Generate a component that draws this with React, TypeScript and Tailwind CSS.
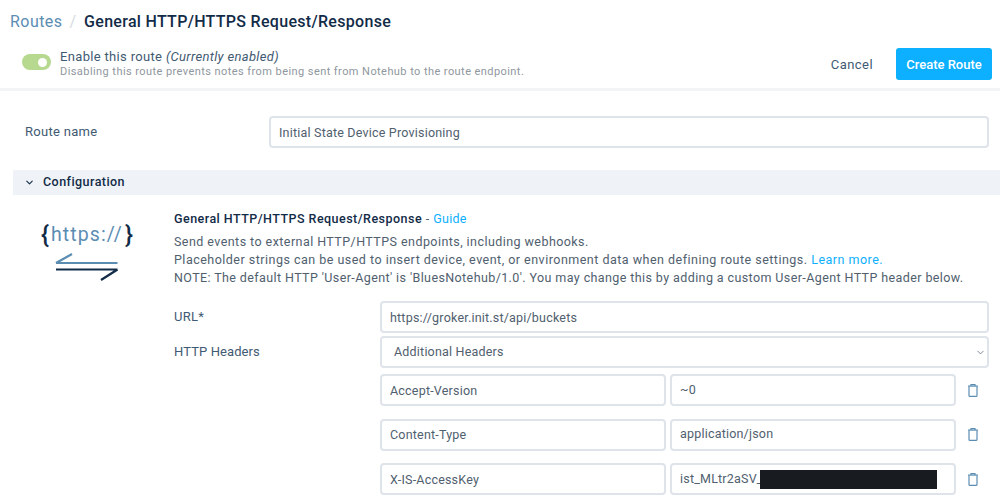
import { ChevronDown } from "lucide-react";

const inputBox =
  "h-[32px] w-full rounded-[4px] border-2 border-[#dfe4ea] bg-white px-[8px] text-[12.5px] tracking-[0.2px] text-[#50606e] outline-none";

function TrashIcon() {
  return (
    <svg width="10" height="13" viewBox="0 0 10 13" fill="none" stroke="#5b8db3" strokeWidth="1.2">
      <path d="M0 2.1H10" />
      <path d="M3 2V0.6H7V2" />
      <path d="M1 2.4V11.4C1 12 1.4 12.4 2 12.4H8C8.6 12.4 9 12 9 11.4V2.4" />
    </svg>
  );
}

function HeaderRow({ name, value, redacted }: { name: string; value: string; redacted?: boolean }) {
  return (
    <div className="flex h-[32px] items-center">
      <input readOnly value={name} className={`${inputBox} !w-[286px] shrink-0`} />
      <div className={`${inputBox} ml-[4px] flex !w-[286px] shrink-0 items-center`}>
        <span className="whitespace-nowrap">{value}</span>
        {redacted && <span className="-ml-[3px] h-[19px] w-[177px] shrink-0 bg-[#181c20]" />}
      </div>
      <button className="ml-[10px] flex w-[13px] items-center justify-center">
        <TrashIcon />
      </button>
    </div>
  );
}

export default function App() {
  return (
    <main className="h-[502px] w-[1000px] overflow-hidden bg-white font-['Roboto',sans-serif] text-[#50606e]">
      <header className="h-[91px] border-b-[3px] border-[#f3f4f5] pl-[10px] pr-[8px]">
        <div className="flex h-[44px] items-center pb-[1px] text-[16px] font-medium">
          <span className="font-normal tracking-[0.45px] text-[#5b8db3]">Routes</span>
          <span className="ml-[7px] mr-[8px] font-normal text-[#d5dbe0]">/</span>
          <span className="tracking-[0.3px] text-[#122b47]">General HTTP/HTTPS Request/Response</span>
        </div>
        <div className="flex items-start justify-between">
          <div className="flex items-start pl-[12px] pt-[5px]">
            <div className="mt-[5px] flex h-[16px] w-[29px] items-center justify-end rounded-full bg-[#b6d98f] pr-[4px]">
              <span className="h-[9px] w-[9px] rounded-full bg-white" />
            </div>
            <div className="ml-[9px]">
              <p className="text-[13px] leading-[15px] tracking-[0.33px] text-[#3f5a73]">
                Enable this route <em>(Currently enabled)</em>
              </p>
              <p className="text-[11px] leading-[15px] tracking-[0.43px] text-[#8f979e]">
                Disabling this route prevents notes from being sent from Notehub to the route endpoint.
              </p>
            </div>
          </div>
          <div className="flex items-center pt-[4px]">
            <button className="pt-[2px] text-[13px] tracking-[0.45px] text-[#3f5a73]">Cancel</button>
            <button className="ml-[23px] h-[32px] w-[96px] rounded-[3px] bg-[#0cb0ff] pt-[2px] text-[13px] font-medium text-white">
              Create Route
            </button>
          </div>
        </div>
      </header>

      <section className="flex items-center pl-[25px] pr-[11px] pt-[25px]">
        <label className="w-[244px] shrink-0 text-[13px] tracking-[0.3px] text-[#3f5a73]">Route name</label>
        <input readOnly value="Initial State Device Provisioning" className={inputBox} />
      </section>

      <section className="ml-[13px] mt-[22px] flex h-[25px] items-center bg-[#eff3f7] pl-[11px]">
        <ChevronDown size={11} strokeWidth={2.4} className="text-[#122b47]" />
        <span className="ml-[8px] text-[12.5px] font-medium tracking-[0.45px] text-[#122b47]">Configuration</span>
      </section>

      <section className="flex pt-[16px]">
        <div className="flex w-[174px] shrink-0 flex-col items-center">
          <div className="mt-[9px] flex h-[30px] w-[128px] items-center justify-center">
            <span className="text-[24px] font-medium leading-none text-[#122b47]">{"{"}</span>
            <span className="mx-[2px] text-[19.5px] leading-none tracking-[1.1px] text-[#5b8db3]">https://</span>
            <span className="text-[24px] font-medium leading-none text-[#122b47]">{"}"}</span>
          </div>
          <svg width="64" height="30" viewBox="0 0 64 30" fill="none" strokeWidth="2.2" className="mt-[3px]">
            <path d="M1 10H62.5M1 10L17 1" stroke="#5b8db3" />
            <path d="M1 16.5H62.5M62.5 16.5L46 27" stroke="#122b47" />
          </svg>
        </div>

        <div className="w-[815px]">
          <p className="text-[12.5px] leading-[16px] font-medium tracking-[0.47px] text-[#122b47]">
            General HTTP/HTTPS Request/Response <span className="font-normal text-[#50606e]">-</span>{" "}
            <a className="font-normal tracking-[0.3px] text-[#0cb0ff]">Guide</a>
          </p>
          <div className="mt-[6px] text-[12.5px] leading-[18px] tracking-[0.44px] text-[#50606e]">
            <p>Send events to external HTTP/HTTPS endpoints, including webhooks.</p>
            <p className="whitespace-nowrap tracking-[0.485px]">
              Placeholder strings can be used to insert device, event, or environment data when defining route settings.{" "}
              <a className="text-[#0cb0ff]">Learn more.</a>
            </p>
            <p className="whitespace-nowrap tracking-[0.4px]">
              NOTE: The default HTTP 'User-Agent' is 'BluesNotehub/1.0'. You may change this by adding a custom User-Agent HTTP header below.
            </p>
          </div>

          <div className="mt-[14px] flex items-center">
            <label className="w-[206px] shrink-0 text-[13px] tracking-[0.3px] text-[#3f5a73]">URL*</label>
            <input readOnly value="https://groker.init.st/api/buckets" className={`${inputBox} !w-[609px]`} />
          </div>
          <div className="mt-[3px] flex items-center">
            <label className="w-[206px] shrink-0 text-[13px] tracking-[0.1px] text-[#3f5a73]">HTTP Headers</label>
            <div className="relative w-[609px]">
              <select className={`${inputBox} appearance-none !px-[12px]`} defaultValue="Additional Headers">
                <option>Additional Headers</option>
              </select>
              <ChevronDown size={11} strokeWidth={1.6} className="pointer-events-none absolute right-[3px] top-[11px] text-[#50606e]" />
            </div>
          </div>

          <div className="ml-[206px] mt-[6px] flex flex-col gap-[12.5px]">
            <HeaderRow name="Accept-Version" value="~0" />
            <HeaderRow name="Content-Type" value="application/json" />
            <HeaderRow name="X-IS-AccessKey" value="ist_MLtr2aSV_" redacted />
          </div>
        </div>
      </section>
    </main>
  );
}
